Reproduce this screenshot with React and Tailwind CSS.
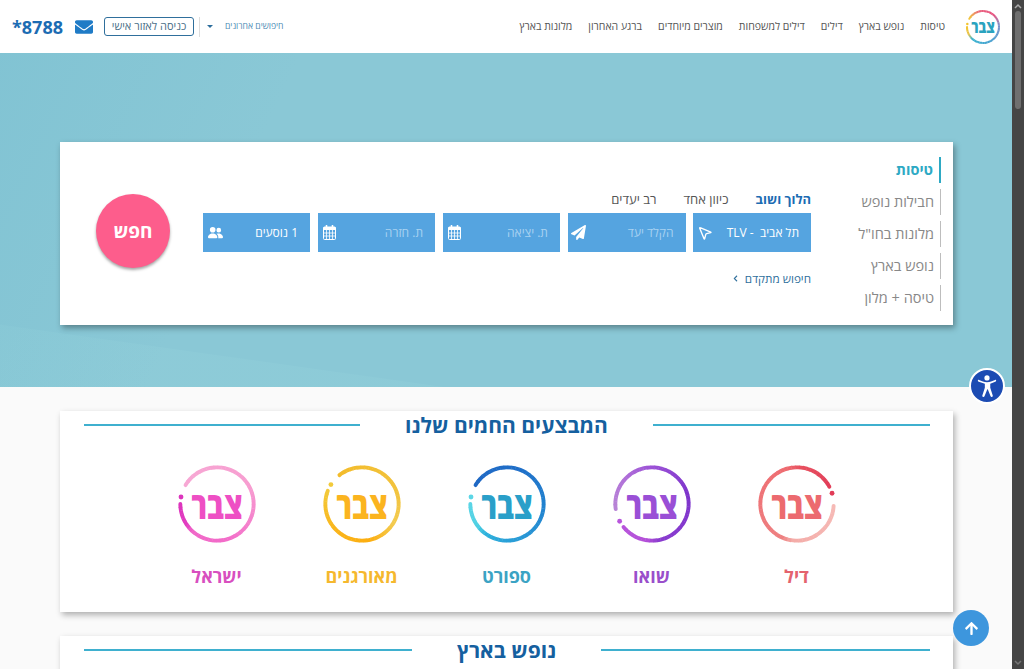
import React from "react";
import { FaArrowUp, FaChevronLeft, FaEnvelope, FaPaperPlane } from "react-icons/fa";
import { BsPeopleFill } from "react-icons/bs";
import { MousePointer2 } from "lucide-react";

const hex = (c) => [1, 3, 5].map((i) => parseInt(c.slice(i, i + 2), 16));
const colorAt = (stops, a) => {
  for (let i = 0; i < stops.length - 1; i++) {
    const [a0, c0] = stops[i];
    const [a1, c1] = stops[i + 1];
    if (a >= a0 && a <= a1) {
      const t = (a - a0) / (a1 - a0 || 1);
      const x = hex(c0);
      const y = hex(c1);
      return `rgb(${x.map((v, k) => Math.round(v + (y[k] - v) * t)).join(",")})`;
    }
  }
  return stops[stops.length - 1][1];
};
const pt = (a, r) => {
  const q = (a * Math.PI) / 180;
  return [50 + r * Math.sin(q), 50 - r * Math.cos(q)];
};

function Ring({ rot, stops, size, text, textSize, stroke = 5 }) {
  const start = 93 + rot;
  const end = 422 + rot;
  const segs = [];
  const step = 6;
  for (let a = start; a < end; a += step) {
    const b = Math.min(a + step + 0.6, end);
    const [x0, y0] = pt(a, 47);
    const [x1, y1] = pt(b, 47);
    segs.push(
      <path
        key={a}
        d={`M${x0} ${y0}A47 47 0 0 1 ${x1} ${y1}`}
        fill="none"
        stroke={colorAt(stops, a)}
        strokeWidth={stroke}
        strokeLinecap={a === start || b === end ? "round" : "butt"}
      />
    );
  }
  const [dx, dy] = pt(73 + rot, 47);
  return (
    <div className="relative flex items-center justify-center" style={{ width: size, height: size }}>
      <svg viewBox="0 0 100 100" width={size} height={size} className="absolute inset-0 overflow-visible">
        {segs}
        <circle cx={dx} cy={dy} r={stroke * 0.62} fill={colorAt(stops, end)} />
      </svg>
      <span className="scale-x-[0.78] leading-none font-extrabold" style={{ fontSize: textSize, color: text }}>
        צבר
      </span>
    </div>
  );
}

const deals = [
  {
    label: "דיל",
    color: "#e4636e",
    text: "#ec6a6f",
    rot: 0,
    stops: [[93, "#f6bab6"], [185, "#f4aca8"], [200, "#ee8081"], [340, "#ee6b70"], [362, "#e8505f"], [422, "#e13c58"]],
  },
  {
    label: "שואו",
    color: "#9a4fcb",
    text: "#9a4fd6",
    rot: 169,
    stops: [[262, "#b884d6"], [310, "#b070d8"], [360, "#9a50d6"], [430, "#7d34cb"], [525, "#8a3ccf"], [545, "#b34fd8"], [592, "#b855dc"]],
  },
  {
    label: "ספורט",
    color: "#3ba3c4",
    text: "#2a9fc9",
    rot: 208,
    stops: [[301, "#1f68c4"], [380, "#1f6fc8"], [460, "#2285d0"], [540, "#2ba2d8"], [572, "#2cb0dc"], [590, "#4fd0e3"], [630, "#5cd6e6"]],
  },
  {
    label: "מאורגנים",
    color: "#f5b82e",
    text: "#fbb41f",
    rot: 229,
    stops: [[322, "#f3bc2b"], [420, "#f2c23c"], [480, "#f3cb50"], [525, "#fcae10"], [580, "#fab41a"], [651, "#f2ca3a"]],
  },
  {
    label: "ישראל",
    color: "#d84fbf",
    text: "#ee4fc4",
    rot: 208,
    stops: [[301, "#f7a8d4"], [420, "#f79cd0"], [520, "#f36cc9"], [580, "#f067c8"], [592, "#e33cc0"], [630, "#dc35bd"]],
  },
];

const tabs = [
  ["טיסות", true],
  ["חבילות נופש", false],
  ["מלונות בחו\"ל", false],
  ["נופש בארץ", false],
  ["טיסה + מלון", false],
];
const nav = ["טיסות", "נופש בארץ", "דילים", "דילים למשפחות", "מוצרים מיוחדים", "ברגע האחרון", "מלונות בארץ"];

function CalendarIcon() {
  return (
    <svg width="13" height="15" viewBox="0 0 13 15" fill="none" stroke="white">
      <rect x="0.5" y="2" width="12" height="12.5" rx="1" strokeWidth="1" />
      <rect x="0.5" y="2" width="12" height="3" fill="white" strokeWidth="0" />
      <path d="M3.5 0.5v3M9.5 0.5v3" strokeWidth="1.6" strokeLinecap="round" />
      <path d="M0.5 8h12M0.5 11h12M3.5 5v9.5M6.5 5v9.5M9.5 5v9.5" strokeWidth="0.8" />
    </svg>
  );
}

function Field({ width, text, light, icon }) {
  return (
    <div className="flex h-[39px] items-center justify-between bg-[#55a4e0] pr-[12px] pl-[5px]" style={{ width }}>
      <span className={`text-[12px] whitespace-pre ${light ? "text-[#a8d2f1]" : "text-white"}`}>{text}</span>
      {icon}
    </div>
  );
}

function SectionTitle({ title, right, left }) {
  return (
    <div className="flex h-[29px] items-center justify-between pr-[23px] pl-[24px]">
      <div className="-mt-[1px] h-[2px] bg-[#3fb0cf]" style={{ width: right }} />
      <h2 className="text-[21px] leading-none font-bold text-[#15609f]">{title}</h2>
      <div className="-mt-[1px] h-[2px] bg-[#3fb0cf]" style={{ width: left }} />
    </div>
  );
}

export default function App() {
  return (
    <div
      dir="rtl"
      className="relative flex h-[669px] overflow-hidden bg-[#fafafa]"
      style={{ fontFamily: '"Open Sans", "Liberation Sans", "Noto Sans", sans-serif' }}
    >
      <div className="flex w-[12px] shrink-0 flex-col items-center bg-[#454545]">
        <svg width="8" height="6" viewBox="0 0 8 6" className="mt-[3px]">
          <path d="M1 5l3-3 3 3" fill="none" stroke="#aaa" strokeWidth="1.5" />
        </svg>
        <div className="mt-[2px] h-[98px] w-[6px] rounded-sm bg-[#6f6f6f]" />
        <div className="flex-1" />
        <svg width="8" height="6" viewBox="0 0 8 6" className="mb-[3px]">
          <path d="M1 1l3 3 3-3" fill="none" stroke="#777" strokeWidth="1.5" />
        </svg>
      </div>

      <div className="min-w-0 flex-1">
        <header className="flex h-[53px] items-center bg-white pr-[12px] pl-[12px]">
          <div className="ml-[21px]">
            <Ring
              rot={208}
              size={34}
              text="#2aa3bf"
              textSize={17}
              stroke={6}
              stops={[[301, "#f0c33c"], [345, "#e9607c"], [400, "#e7507f"], [440, "#7f8fc8"], [500, "#4c9fd0"], [580, "#36b3cf"], [600, "#e9c34a"], [630, "#f3c52e"]]}
            />
          </div>
          <nav className="flex items-center gap-[16px] text-[10.5px] whitespace-nowrap text-[#555]">
            {nav.map((n) => (
              <span key={n}>{n}</span>
            ))}
          </nav>
          <div className="mr-auto flex items-center">
            <span className="ml-[12px] text-[8.6px] text-[#4d8cb5]">חיפושים אחרונים</span>
            <span className="ml-[7px] h-0 w-0 border-x-[3px] border-t-[3px] border-x-transparent border-t-[#2c6d9c]" />
            <span className="ml-[5px] h-[20px] w-px bg-[#ddd]" />
            <span className="ml-[11px] flex h-[19px] w-[90px] items-center justify-center rounded-[3px] border-[1.5px] border-[#2f6f9c] text-[11px] text-[#4b6f88]">
              כניסה לאזור אישי
            </span>
            <FaEnvelope className="ml-[12px] text-[18px] text-[#1f7bc6]" />
            <span dir="ltr" className="text-[18px] leading-none font-bold text-[#1c6cb3]">
              *8788
            </span>
          </div>
        </header>

        <section
          className="h-[334px] pt-[89px]"
          style={{
            background:
              "linear-gradient(115deg, rgba(110,185,205,0.3) 0%, rgba(110,185,205,0) 26%), linear-gradient(8deg, rgba(160,220,225,0.14) 0%, rgba(160,220,225,0.14) 13%, rgba(160,220,225,0) 13.2%), #8ac8d6",
          }}
        >
          <div className="mr-[59px] flex h-[183px] w-[893px] bg-white shadow-[2px_3px_6px_rgba(0,0,0,0.35)]">
            <div className="flex w-[142px] shrink-0 flex-col gap-[6px] pt-[15px] pr-[12px]">
              {tabs.map(([t, active]) => (
                <div
                  key={t}
                  className={`flex h-[26px] items-center pr-[6px] text-[14.5px] whitespace-nowrap ${
                    active ? "border-r-2 border-[#2ea9c4] font-bold text-[#2ea9c4]" : "border-r border-[#bdbdbd] text-[#888]"
                  }`}
                >
                  {t}
                </div>
              ))}
            </div>
            <div className="flex flex-1 items-start">
              <div className="w-[609px] pt-[48px]">
                <div className="flex h-[20px] items-center text-[13px]">
                  <span className="ml-[27px] font-bold text-[#1c6cb3]">הלוך ושוב</span>
                  <span className="ml-[27px] text-[#555]">כיוון אחד</span>
                  <span className="text-[#555]">רב יעדים</span>
                </div>
                <div className="mt-[3px] flex gap-[7.5px]">
                  <Field width={118} text="תל אביב  - TLV" icon={<MousePointer2 size={16} strokeWidth={2} className="-ml-[1px] text-white" />} />
                  <Field width={118} text="הקלד יעד" light icon={<FaPaperPlane className="-ml-[2px] text-[15px] text-white" />} />
                  <Field width={117.5} text="ת. יציאה" light icon={<CalendarIcon />} />
                  <Field width={117.5} text="ת. חזרה" light icon={<CalendarIcon />} />
                  <Field width={107.5} text="1 נוסעים" icon={<BsPeopleFill className="-scale-x-100 text-[15px] text-white" />} />
                </div>
                <div className="mt-[18px] flex items-center gap-[6px] text-[11.7px] text-[#2f6f9c]">
                  חיפוש מתקדם
                  <FaChevronLeft className="text-[7px]" />
                </div>
              </div>
              <button className="mt-[52px] mr-[32px] flex h-[74px] w-[74px] items-center justify-center rounded-full bg-[#fd5d8c] text-[19px] font-bold text-white shadow-[0_2px_3px_rgba(0,0,0,0.35)]">
                חפש
              </button>
            </div>
          </div>
        </section>

        <div className="flex flex-col gap-[24px] pt-[24px] pr-[59px]">
          <section className="h-[201px] w-[893px] bg-white shadow-[2px_3px_6px_rgba(0,0,0,0.3)]">
            <SectionTitle title="המבצעים החמים שלנו" right={277} left={276} />
            <div className="mt-[25px] flex justify-center gap-[67px]">
              {deals.map((d) => (
                <div key={d.label} className="flex w-[78px] flex-col items-center whitespace-nowrap">
                  <Ring rot={d.rot} stops={d.stops} size={78} text={d.text} textSize={37} stroke={5} />
                  <span className="mt-[21px] text-[18px] leading-[24px] font-bold" style={{ color: d.color }}>
                    {d.label}
                  </span>
                </div>
              ))}
            </div>
          </section>
          <section className="h-[120px] w-[893px] bg-white shadow-[2px_3px_6px_rgba(0,0,0,0.3)]">
            <SectionTitle title="נופש בארץ" right={329} left={328} />
          </section>
        </div>
      </div>

      <div className="absolute top-[368px] left-[969px] flex h-[36px] w-[36px] items-center justify-center rounded-full border-2 border-white bg-[#1c4bb3]">
        <svg viewBox="0 0 24 24" width="26" height="26" fill="white">
          <circle cx="12" cy="4.5" r="2.4" />
          <path d="M3.6 7.4c-.3-.6.4-1.3 1-1l3.6 1.5c2.4.9 5.2.9 7.6 0l3.6-1.5c.6-.3 1.3.4 1 1-.2.4-.5.6-.8.7l-4.6 1.9v3.6l2.3 7.2c.2.7-.2 1.3-.8 1.4-.5.1-1-.2-1.2-.7l-2.6-6.4h-.4l-2.6 6.4c-.2.5-.7.8-1.2.7-.6-.1-1-.7-.8-1.4l2.3-7.2V10L4.4 8.1c-.3-.1-.6-.3-.8-.7z" />
        </svg>
      </div>
      <div className="absolute top-[610px] left-[953px] flex h-[36px] w-[36px] items-center justify-center rounded-full bg-[#3d96dd]">
        <FaArrowUp className="text-[15px] text-white" />
      </div>
    </div>
  );
}
